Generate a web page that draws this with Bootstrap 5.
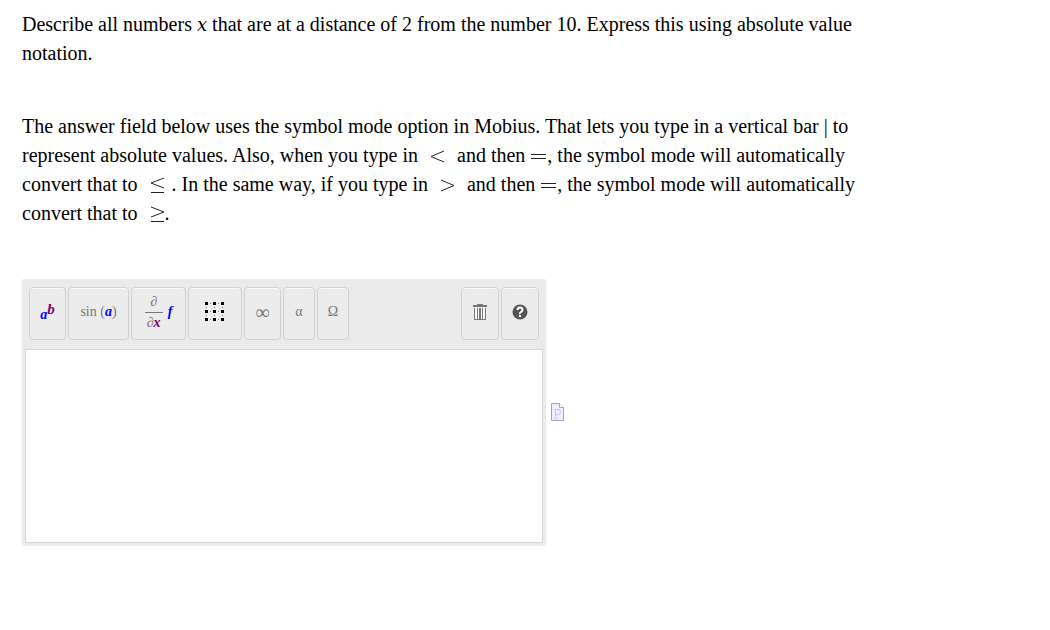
<!DOCTYPE html>
<html lang="en">
<head>
<meta charset="utf-8">
<meta name="viewport" content="width=device-width, initial-scale=1">
<title>Absolute value notation</title>
<link href="https://cdn.jsdelivr.net/npm/bootstrap@5.3.0/dist/css/bootstrap.min.css" rel="stylesheet">
<style>
  body { font-family: "Liberation Serif", serif; color: #000; background: #fff; }
  .question { padding: 10px 22px 0; }
  .prompt { max-width: 848px; font-size: 20px; line-height: 29px; }
  .prompt p { margin-bottom: 44px; }
  .prompt p + p { margin-bottom: 51px; }
  .var { font-family: "DejaVu Serif", serif; font-style: italic; font-size: 18px; line-height: 1; }
  .rel { width: 15px; height: 16px; margin: 0 7px; vertical-align: -2px; fill: none; stroke: #222; stroke-width: 1; }
  .rel.eq { margin: 0 1px; }
  .rel.tight { margin-right: 0; }
  .editor { width: 524px; background: #ebebeb; padding: 8px 3px 3px; border-radius: 2px; }
  .tools { gap: 2px; padding: 0 4px; margin-bottom: 9px; }
  .tool { height: 53px; padding: 0 0 3px; border: 1px solid #d2d2d2; border-radius: 4px; background: #ececec; box-shadow: inset 0 1px 0 #fafafa; color: #777; font-size: 14px; line-height: 20px; display: flex; align-items: center; justify-content: center; }
  .tool:hover { background: #e2e2e2; }
  .w-s { width: 32px; } .w-m { width: 37px; } .w-c { width: 38px; } .w-g { width: 54px; } .w-l { width: 55px; } .w-xl { width: 61px; }
  .a { color: #00f; font-style: italic; font-weight: bold; }
  .b { color: #800060; font-style: italic; font-weight: bold; }
  .pow { font-size: 15px; vertical-align: 5px; }
  .infinity { font-size: 20px; }
  .frac { display: inline-flex; flex-direction: column; margin-right: 5px; }
  .frac > span:first-child { border-bottom: 1px solid #777; width: 18px; }
  .answer { height: 194px; resize: none; border: 1px solid #d6d6d6; border-radius: 0; }
</style>
</head>
<body>
<main class="question">
  <div class="prompt">
    <p>Describe all numbers <span class="var">x</span> that are at a distance of 2 from the number 10. Express this using absolute value notation.</p>
    <p>The answer field below uses the symbol mode option in Mobius. That lets you type in a vertical bar | to represent absolute values. Also, when you type in
      <svg class="rel" viewBox="0 0 15 16" role="img" aria-label="less than"><path d="M14 3 1 8.500l13 5.500"/></svg>
      and then <svg class="rel eq" viewBox="0 0 15 16" role="img" aria-label="equals"><path d="M0 6.500h15M0 10.500h15"/></svg>, the symbol mode will automatically convert that to
      <svg class="rel" viewBox="0 0 15 16" role="img" aria-label="less than or equal"><path d="M14 1 1 6l13 5M1 15.500h13"/></svg>. In the same way, if you type in
      <svg class="rel" viewBox="0 0 15 16" role="img" aria-label="greater than"><path d="M1 3l13 5.500L1 14"/></svg>
      and then <svg class="rel eq" viewBox="0 0 15 16" role="img" aria-label="equals"><path d="M0 6.500h15M0 10.500h15"/></svg>, the symbol mode will automatically convert that to
      <svg class="rel tight" viewBox="0 0 15 16" role="img" aria-label="greater than or equal"><path d="M1 1l13 5-13 5M1 15.500h13"/></svg>.</p>
  </div>
  <div class="d-flex align-items-center gap-1">
    <div class="editor">
      <div class="tools d-flex" role="toolbar" aria-label="Equation tools">
        <button type="button" class="tool w-m" aria-label="Power"><span><span class="a">a</span><span class="b pow">b</span></span></button>
        <button type="button" class="tool w-xl"><span>sin (<span class="a">a</span>)</span></button>
        <button type="button" class="tool w-l"><span class="frac"><span>∂</span><span>∂<span class="b">x</span></span></span><span class="a">f</span></button>
        <button type="button" class="tool w-g" aria-label="Matrix">
          <svg width="20" height="20" viewBox="0 0 20 20"><path d="M0 0h3v3H0zM8 0h3v3H8zM16 0h3v3h-3zM0 8h3v3H0zM8 8h3v3H8zM16 8h3v3h-3zM0 16h3v3H0zM8 16h3v3H8zM16 16h3v3h-3z" fill="#000"/><path d="M5 1h1v1H5zM13 1h1v1h-1zM5 9h1v1H5zM13 9h1v1h-1zM5 17h1v1H5zM13 17h1v1h-1zM1 5h1v1H1zM9 5h1v1H9zM17 5h1v1h-1zM1 13h1v1H1zM9 13h1v1H9zM17 13h1v1h-1z" fill="#777"/></svg>
        </button>
        <button type="button" class="tool w-m infinity">∞</button>
        <button type="button" class="tool w-s">α</button>
        <button type="button" class="tool w-s">Ω</button>
        <button type="button" class="tool w-c ms-auto" aria-label="Clear">
          <svg width="14" height="16" viewBox="0 0 14 16"><path d="M4 0h6v1h4v2H0V1h4z" fill="#777"/><path d="M1 4h12v12H1z" fill="#777"/><path d="M2 4h2v11H2zM5 4h1v11H5zM8 4h1v11H8zM10 4h2v11h-2z" fill="#fff"/></svg>
        </button>
        <button type="button" class="tool w-c" aria-label="Help">
          <svg width="16" height="16" viewBox="0 0 16 16"><circle cx="8" cy="8" r="7.500" fill="#555"/><path d="M5.500 6Q5.500 3.500 8 3.500T10.500 6Q10.500 7 9 8T8 10" fill="none" stroke="#fff" stroke-width="2"/><path d="M7 11h2v2H7z" fill="#fff"/></svg>
        </button>
      </div>
      <textarea class="answer form-control" aria-label="Answer"></textarea>
    </div>
    <a href="#preview" class="d-flex" aria-label="Preview">
      <svg width="15" height="19" viewBox="0 0 15 19"><path d="M1.500.500h8l4 4v13h-12z" fill="#eeeeff" stroke="#a4a4b4"/><path d="M9.500.500v4h4" fill="#fff" stroke="#a4a4b4"/><path d="M4 6.500h4.500q2 0 2 2.500t-2 2.500H6M5.500 6.500v8M4 15.500h4" fill="none" stroke="#c6c6dc"/></svg>
    </a>
  </div>
</main>
</body>
</html>
